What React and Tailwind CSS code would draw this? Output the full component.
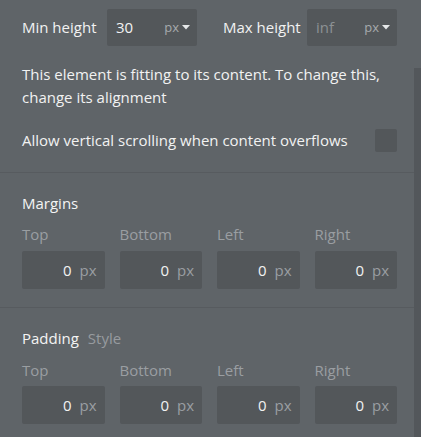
import React from "react";

function Caret() {
  return (
    <svg width="8" height="5" viewBox="0 0 8 5" className="ml-[3px]">
      <path d="M0 0 L8 0 L4 4.5 Z" fill="#e6e8e9" />
    </svg>
  );
}

function SizeBox({ value, placeholder }) {
  return (
    <div className="flex h-[37px] w-[90px] items-center rounded-[2px] bg-[#53575a] pl-[9px] pr-[7px]">
      <span className={placeholder ? "flex-1 text-[#8c9194]" : "flex-1 text-[#f2f2f2]"}>{value}</span>
      <span className="text-[13px] text-[#a6aaad]">px</span>
      <Caret />
    </div>
  );
}

function NumBox() {
  return (
    <div className="flex h-[38px] items-center justify-end rounded-[2px] bg-[#53575a] pr-[8px]">
      <span className="text-[#f2f2f2]">0</span>
      <span className="ml-[8px] text-[#9a9ea2]">px</span>
    </div>
  );
}

function Group({ title, extra, labelGap }) {
  return (
    <div className="border-t border-[#575b5f] pl-[22px] pr-[17px]">
      <div className="mt-[19px] flex h-[22px] items-center">
        <span className="text-[#f4f4f4]">{title}</span>
        {extra && <span className="ml-[9px] text-[#979b9f]">{extra}</span>}
      </div>
      <div className={"grid grid-cols-4 gap-x-[15px] " + (labelGap ? "mt-[11px]" : "mt-[10px]")}>
        {["Top", "Bottom", "Left", "Right"].map((l) => (
          <div key={l} className="flex flex-col">
            <span className="h-[20px] leading-[20px] text-[#9a9ea2]">{l}</span>
            <div className={labelGap ? "mt-[6px]" : "mt-[7px]"}>
              <NumBox />
            </div>
          </div>
        ))}
      </div>
    </div>
  );
}

export default function App() {
  return (
    <div
      className="relative h-[437px] w-[421px] overflow-hidden bg-[#5f6468] text-[15px]"
      style={{ fontFamily: '"Open Sans", sans-serif' }}
    >
      <div className="absolute right-0 top-[68px] bottom-0 w-[7px] bg-[#53575b]" />
      <div className="pr-[7px]">
        <div className="flex items-center pl-[22px] pt-[9px]">
          <span className="w-[85px] text-[#f2f2f2]">Min height</span>
          <SizeBox value="30" />
          <span className="ml-[26px] w-[84px] text-[#f2f2f2]">Max height</span>
          <SizeBox value="inf" placeholder />
        </div>
        <p className="mt-[17px] h-[46px] pl-[22px] pr-[24px] leading-[23px] text-[#f2f2f2]">
          This element is fitting to its content. To change this, change its alignment
        </p>
        <div className="mt-[20px] flex items-center pl-[22px] pr-[17px]">
          <span className="flex-1 text-[#f2f2f2]">Allow vertical scrolling when content overflows</span>
          <div className="h-[23px] w-[22px] rounded-[2px] bg-[#53575a]" />
        </div>
        <div className="mt-[20px]">
          <Group title="Margins" />
        </div>
        <div className="mt-[18px]">
          <Group title="Padding" extra="Style" labelGap />
        </div>
      </div>
    </div>
  );
}
